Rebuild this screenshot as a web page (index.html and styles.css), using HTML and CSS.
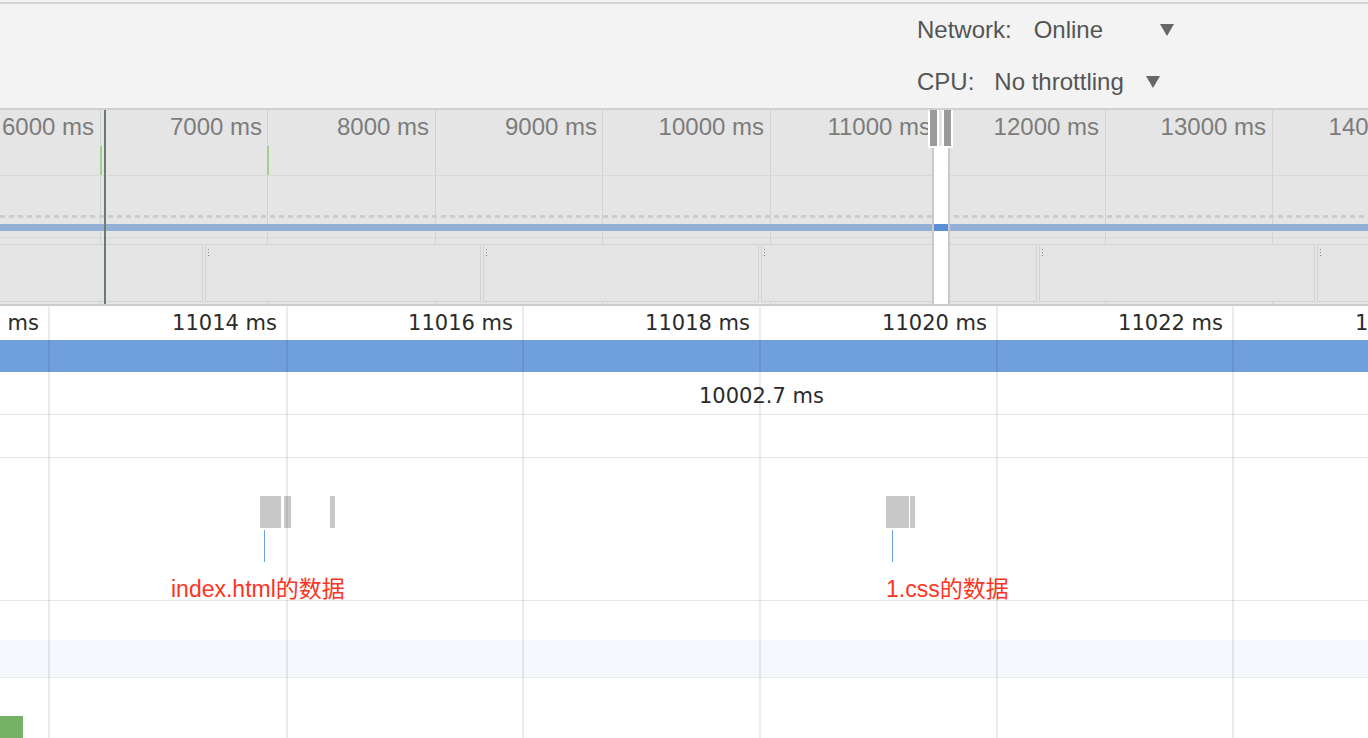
FILE: index.html
```html
<!DOCTYPE html>
<html>
<head>
<meta charset="utf-8">
<link rel="stylesheet" href="styles.css">
</head>
<body>
<div class="toolbar">
  <div class="tb-row r1"><span class="lbl">Network:</span><span class="val net">Online</span><span class="caret c1"></span></div>
  <div class="tb-row r2"><span class="lbl">CPU:</span><span class="val cpu">No throttling</span><span class="caret c2"></span></div>
</div>

<div class="overview">
  <div class="ov-grid">
    <i class="vline" style="left:100px"></i>
    <i class="vline" style="left:267px"></i>
    <i class="vline" style="left:435px"></i>
    <i class="vline" style="left:602px"></i>
    <i class="vline" style="left:770px"></i>
    <i class="vline" style="left:937px"></i>
    <i class="vline" style="left:1105px"></i>
    <i class="vline" style="left:1272px"></i>
  </div>
  <div class="ov-labels">
    <span class="ov-lbl" style="left:-66px">6000 ms</span>
    <span class="ov-lbl" style="left:102px">7000 ms</span>
    <span class="ov-lbl" style="left:269px">8000 ms</span>
    <span class="ov-lbl" style="left:437px">9000 ms</span>
    <span class="ov-lbl" style="left:604px">10000 ms</span>
    <span class="ov-lbl" style="left:771px">11000 ms</span>
    <span class="ov-lbl" style="left:939px">12000 ms</span>
    <span class="ov-lbl" style="left:1106px">13000 ms</span>
    <span class="ov-lbl" style="left:1274px">14000 ms</span>
  </div>
  <div class="ov-ticks">
    <i class="tick" style="left:100px"></i>
    <i class="tick" style="left:267px"></i>
  </div>
  <div class="ov-cpu"></div>
  <div class="ov-dash"></div>
  <div class="ov-bar"></div>
  <div class="ov-sep"></div>
  <div class="ov-boxes">
    <div class="box"></div>
    <div class="box"><i class="mark"></i></div>
    <div class="box"><i class="mark"></i></div>
    <div class="box"><i class="mark"></i></div>
    <div class="box"><i class="mark"></i></div>
    <div class="box"><i class="mark"></i></div>
  </div>
  <div class="cursor"></div>
  <div class="sel"></div>
  <div class="sel-bar"></div>
  <div class="handle h-left"></div>
  <div class="handle h-right"></div>
</div>

<div class="main">
  <div class="ruler">
    <span class="r-lbl" style="left:-121px">11012 ms</span>
    <span class="r-lbl" style="left:117px">11014 ms</span>
    <span class="r-lbl" style="left:353px">11016 ms</span>
    <span class="r-lbl" style="left:590px">11018 ms</span>
    <span class="r-lbl" style="left:827px">11020 ms</span>
    <span class="r-lbl" style="left:1063px">11022 ms</span>
    <span class="r-lbl" style="left:1300px">11024 ms</span>
  </div>
  <div class="flame"></div>
  <div class="row row-sum"><span class="sum">10002.7 ms</span></div>
  <div class="row row-empty"></div>
  <div class="row row-net">
    <i class="blk" style="left:260px;width:21px"></i>
    <i class="blk" style="left:284px;width:7px"></i>
    <i class="blk" style="left:330px;width:5px"></i>
    <i class="blk" style="left:886px;width:23px"></i>
    <i class="blk" style="left:910px;width:5px"></i>
    <i class="pin" style="left:264px"></i>
    <i class="pin" style="left:892px"></i>
    <span class="note" style="left:171px">index.html的数据</span>
    <span class="note" style="left:886px">1.css的数据</span>
  </div>
  <div class="row-a"></div>
  <div class="row-b"></div>
  <div class="row-c"><div class="green"></div></div>
  <div class="main-grid">
    <i class="gline" style="left:48px"></i>
    <i class="gline" style="left:286px"></i>
    <i class="gline" style="left:522px"></i>
    <i class="gline" style="left:759px"></i>
    <i class="gline" style="left:996px"></i>
    <i class="gline" style="left:1232px"></i>
  </div>
</div>
</body>
</html>
```

FILE: styles.css
```css
* { box-sizing: border-box; }
html, body {
  margin: 0;
  padding: 0;
}
body {
  width: 1368px;
  height: 738px;
  overflow: hidden;
  background: #f3f3f3;
  font-family: "Liberation Sans", Arial, sans-serif;
}

/* Toolbar */
.toolbar {
  margin-top: 2px;
  height: 108px;
  border-top: 2px solid #d3d3d3;
  border-bottom: 2px solid #cfcfcf;
  background: #f3f3f3;
  padding-top: 1px;
  padding-left: 917px;
  font-size: 24px;
  color: #555;
}
.tb-row {
  display: flex;
  align-items: center;
  height: 50px;
  white-space: nowrap;
}
.r2 { margin-top: 2px; }
.net { margin-left: 22px; }
.cpu { margin-left: 20px; }
.caret {
  width: 0;
  height: 0;
  border-left: 7px solid transparent;
  border-right: 7px solid transparent;
  border-top: 12px solid #676767;
}
.c1 { margin-left: 57px; }
.c2 { margin-left: 22px; }

/* Overview */
.overview {
  position: relative;
  height: 196px;
  background: #e5e5e5;
  border-bottom: 2px solid #cbcbcb;
  overflow: hidden;
}
.ov-grid {
  position: absolute;
  inset: 0;
}
.vline {
  position: absolute;
  top: 0;
  bottom: 0;
  width: 1px;
  background: #d3d3d3;
}
.ov-labels {
  position: relative;
  height: 36px;
}
.ov-lbl {
  position: absolute;
  top: 0;
  width: 160px;
  text-align: right;
  font-size: 24px;
  line-height: 33px;
  color: #7c7c7c;
  white-space: nowrap;
}
.ov-ticks {
  position: relative;
  height: 30px;
  border-bottom: 1px solid #d8d8d8;
}
.tick {
  position: absolute;
  top: 0;
  width: 2px;
  height: 29px;
  background: #9fd191;
}
.ov-cpu { height: 39px; }
.ov-dash {
  height: 3px;
  background: repeating-linear-gradient(90deg, #cdcdcd 0 5px, transparent 5px 9px);
}
.ov-bar {
  position: relative;
  height: 7px;
  margin-top: 6px;
  background: #93afd3;
}
.ov-sep {
  position: relative;
  height: 1px;
  margin-top: 6px;
  background: #d9d9d9;
}
.ov-boxes {
  position: relative;
  display: flex;
  gap: 2px;
  margin-top: 6px;
  margin-left: -73px;
  height: 58px;
}
.box {
  position: relative;
  flex: 0 0 276px;
  border: 1px solid #d3d3d3;
  background: #e5e5e5;
}
.mark {
  position: absolute;
  left: 2px;
  top: 4px;
  width: 1px;
  height: 8px;
  background: repeating-linear-gradient(180deg, #888 0 1px, transparent 1px 3px);
}
.cursor {
  position: absolute;
  left: 104px;
  top: 0;
  bottom: 0;
  width: 2px;
  background: #6b7c6d;
}
.sel {
  position: absolute;
  left: 932px;
  top: 36px;
  bottom: 0;
  width: 18px;
  background: #fff;
  border-left: 2px solid #c9c9c9;
  border-right: 2px solid #c9c9c9;
}
.sel-bar {
  position: absolute;
  left: 934px;
  top: 114px;
  width: 14px;
  height: 7px;
  background: #5b8fd7;
}
.handle {
  position: absolute;
  top: 0;
  width: 11px;
  height: 38px;
  background: #9a9a9a;
  border: 2px solid #fff;
  border-top: 0;
}
.h-left { left: 928px; }
.h-right { left: 942px; }

/* Main timeline */
.main {
  position: relative;
  height: 432px;
  background: #fff;
  font-family: "DejaVu Sans", Verdana, sans-serif;
  color: #2b2b2b;
}
.ruler {
  position: relative;
  height: 34px;
}
.r-lbl {
  position: absolute;
  top: 0;
  width: 160px;
  text-align: right;
  font-size: 21px;
  line-height: 34px;
  white-space: nowrap;
}
.flame {
  height: 32px;
  background: #6fa0dc;
}
.row {
  position: relative;
  border-bottom: 1px solid #e6e6e6;
}
.row-sum {
  height: 43px;
  padding-top: 7px;
  padding-left: 699px;
  font-size: 21px;
  line-height: 35px;
}
.row-empty { height: 43px; }
.row-net { height: 143px; }
.blk {
  position: absolute;
  top: 38px;
  height: 32px;
  background: #c8c8c8;
}
.pin {
  position: absolute;
  top: 72px;
  width: 1px;
  height: 32px;
  background: #6fa0e0;
}
.note {
  position: absolute;
  top: 120px;
  font-family: "Liberation Sans", Arial, "Noto Sans CJK SC", sans-serif;
  font-size: 23px;
  line-height: 23px;
  color: #fb3523;
  white-space: nowrap;
}
.row-a { height: 39px; }
.row-b {
  height: 38px;
  background: #f5f8fd;
  border-bottom: 1px solid #e8eaee;
}
.row-c { padding-top: 38px; }
.green {
  width: 23px;
  height: 22px;
  background: #74b266;
}
.main-grid {
  position: absolute;
  inset: 0;
  pointer-events: none;
}
.gline {
  position: absolute;
  top: 0;
  bottom: 0;
  width: 2px;
  background: rgba(0, 0, 0, 0.08);
}
```
